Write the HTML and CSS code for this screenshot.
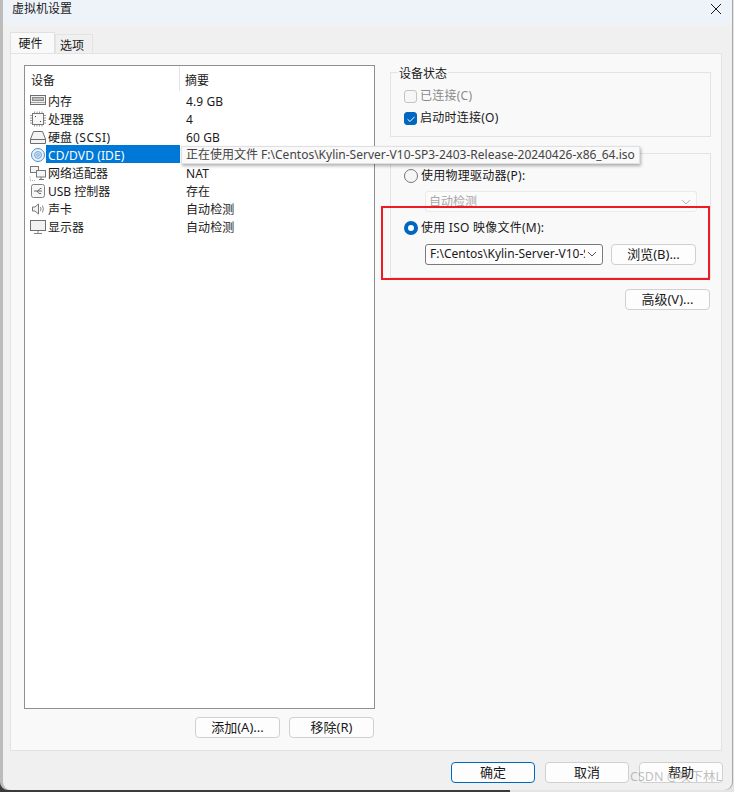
FILE: index.html
```html
<!DOCTYPE html>
<html lang="zh-CN">
<head>
<meta charset="utf-8">
<title>虚拟机设置</title>
<link rel="stylesheet" href="styles.css">
</head>
<body>
<div class="window">
  <header class="titlebar">
    <span class="title">虚拟机设置</span>
    <svg class="close" width="12" height="12" viewBox="0 0 12 12"><path d="M1 1L11 11M11 1L1 11" stroke="#1a1a1a" stroke-width="1" fill="none"/></svg>
  </header>
  <div class="content">
    <div class="tabs">
      <div class="tab active">硬件</div>
      <div class="tab">选项</div>
    </div>
    <div class="panel">
      <div class="left">
        <div class="list">
          <div class="list-head"><div class="col-a">设备</div><div class="col-b">摘要</div></div>
          <div class="row">
            <svg class="ico" width="18" height="14" viewBox="0 0 18 14"><rect x="1.500" y="2.500" width="15" height="9" fill="#f2f2f2" stroke="#6e6e6e"/><rect x="3.500" y="4.500" width="11" height="3" fill="#bdbdbd" stroke="#8a8a8a" stroke-width="1"/><path d="M2 9.500H16" stroke="#a0a0a0"/></svg>
            <span class="name">内存</span><span class="val">4.9 GB</span>
          </div>
          <div class="row">
            <svg class="ico" width="18" height="16" viewBox="0 0 18 16"><rect x="3.500" y="2.500" width="11" height="11" fill="#f7f7f7" stroke="#777"/><path d="M5.500 0.500V2M8 0.500V2M10.500 0.500V2M13 0.500V2M5.500 14V15.500M8 14V15.500M10.500 14V15.500M13 14V15.500M1 4.500H3M1 7H3M1 9.500H3M1 12H3M15 4.500H17M15 7H17M15 9.500H17M15 12H17" stroke="#9a9a9a"/><path d="M6 5h1v1H6zM11 10h1v1h-1z" fill="#444"/></svg>
            <span class="name">处理器</span><span class="val">4</span>
          </div>
          <div class="row">
            <svg class="ico" width="18" height="16" viewBox="0 0 18 16"><path d="M1.500 10L4.500 2.500H13.500L16.500 10V14.500H1.500Z" fill="#f4f4f4" stroke="#6e6e6e"/><path d="M1.500 10.500H16.500" stroke="#6e6e6e"/></svg>
            <span class="name">硬盘 <span class="latin">(SCSI)</span></span><span class="val">60 GB</span>
          </div>
          <div class="row">
            <svg class="ico" width="18" height="16" viewBox="0 0 18 16"><circle cx="9" cy="8" r="6.500" fill="#eaf3fb" stroke="#4c8fc9"/><circle cx="9" cy="8" r="3.500" fill="#c9dff2" stroke="#7aaad4"/><circle cx="9" cy="8" r="1.200" fill="#fff" stroke="#4c8fc9" stroke-width=".7"/></svg>
            <span class="name selected">CD/DVD (IDE)</span>
          </div>
          <div class="row">
            <svg class="ico" width="18" height="16" viewBox="0 0 18 16"><rect x="1.500" y="1.500" width="8" height="6" fill="#f4f4f4" stroke="#777"/><rect x="7.500" y="5.500" width="9" height="6.500" fill="#f4f4f4" stroke="#777"/><path d="M10 14.500H15M12 12V14.500" stroke="#777"/><path d="M1 11.500V15.500H7" stroke="#aaa" stroke-dasharray="1 1" fill="none"/></svg>
            <span class="name">网络适配器</span><span class="val">NAT</span>
          </div>
          <div class="row">
            <svg class="ico" width="18" height="16" viewBox="0 0 18 16"><rect x="2.500" y="1.500" width="13" height="13" rx="2" fill="#f7f7f7" stroke="#808080"/><path d="M5 8H13M9 8L11 5.500H12.500M8 8L10 10.500H12" stroke="#666" fill="none"/></svg>
            <span class="name">USB 控制器</span><span class="val">存在</span>
          </div>
          <div class="row">
            <svg class="ico" width="18" height="16" viewBox="0 0 18 16"><path d="M3.500 6H6L9.500 3V13L6 10H3.500Z" fill="#f4f4f4" stroke="#777"/><path d="M11.500 6Q12.500 8 11.500 10M13.500 4.500Q15.200 8 13.500 11.500" stroke="#888" fill="none"/></svg>
            <span class="name">声卡</span><span class="val">自动检测</span>
          </div>
          <div class="row">
            <svg class="ico" width="18" height="16" viewBox="0 0 18 16"><rect x="1.500" y="1.500" width="15" height="10" fill="#f2f2f2" stroke="#707070"/><path d="M5 14.500H13M9 12V14" stroke="#808080"/></svg>
            <span class="name">显示器</span><span class="val">自动检测</span>
          </div>
        </div>
        <div class="list-actions">
          <button class="btn">添加(A)...</button>
          <button class="btn">移除(R)</button>
        </div>
      </div>
      <div class="right">
        <fieldset class="group state">
          <legend>设备状态</legend>
          <label class="check disabled"><span class="box"></span>已连接(C)</label>
          <label class="check"><span class="box on"><svg width="14" height="14" viewBox="0 0 14 14"><path d="M3.500 7.200L6 9.500L10.500 4.800" stroke="#fff" stroke-width="1" fill="none"/></svg></span>启动时连接(O)</label>
        </fieldset>
        <div class="group media">
          <label class="check"><span class="radio"></span>使用物理驱动器(P):</label>
          <div class="select wide disabled"><span>自动检测</span><svg width="10" height="6" viewBox="0 0 10 6"><path d="M1 1L5 5L9 1" stroke="#b5b5b5" fill="none"/></svg></div>
          <label class="check iso"><span class="radio on"></span>使用 ISO 映像文件(M):</label>
          <div class="iso-row">
            <div class="select path"><span class="clip">F:\Centos\Kylin-Server-V10-SP3-2403-Release</span><svg width="10" height="6" viewBox="0 0 10 6"><path d="M1 1L5 5L9 1" stroke="#555" fill="none"/></svg></div>
            <button class="btn">浏览(B)...</button>
          </div>
        </div>
        <div class="adv"><button class="btn">高级(V)...</button></div>
      </div>
    </div>
    <div class="footer">
      <button class="btn primary">确定</button>
      <button class="btn">取消</button>
      <button class="btn">帮助</button>
    </div>
  </div>
</div>
<div class="tooltip">正在使用文件 F:\Centos\Kylin-Server-V10-SP3-2403-Release-20240426-x86_64.iso</div>
<div class="redbox"></div>
<div class="watermark">CSDN @攻下林L</div>
</body>
</html>
```
FILE: styles.css
```css
* { box-sizing: border-box; }
html, body { margin: 0; height: 100%; }
body {
  position: relative;
  width: 734px;
  height: 792px;
  overflow: hidden;
  background: linear-gradient(to right, #3a3a3a 0, #3a3a3a 510px, #e4e4e4 510px);
  font: 12px/16px "Noto Sans", "Noto Sans CJK SC", sans-serif;
  color: #1a1a1a;
}
.window {
  margin-left: 3px;
  width: 729px;
  height: 790px;
  background: #f0f0f0;
  border-radius: 0 0 8px 8px;
  box-shadow: -3px 0 0 #bcbcbc, 1px 0 0 #a8a8a8;
  display: flex;
  flex-direction: column;
}
.titlebar {
  height: 25px;
  flex: none;
  background: #eef3fa;
  display: flex;
  align-items: center;
  justify-content: space-between;
  padding: 0 10px 0 9px;
}
.title { position: relative; top: -4px; }
.close { position: relative; top: -4px; }
.content { flex: 1; padding: 7px 10px 0 7px; display: flex; flex-direction: column; }
.tabs { display: flex; align-items: flex-end; height: 21px; position: relative; z-index: 1; }
.tab {
  width: 38px;
  height: 19px;
  background: #f0f0f0;
  border: 1px solid #e3e3e3;
  border-bottom: 0;
  text-align: center;
  line-height: 21px;
  padding-right: 4px;
}
.tab.active { width: 45px; height: 21px; background: #f9f9f9; border-color: #e0e0e0; line-height: 22px; }
.panel {
  height: 698px;
  background: #f9f9f9;
  border: 1px solid #e3e3e3;
  padding: 11px 12px 9px 13px;
  display: flex;
  gap: 15px;
}
.left { width: 351px; flex: none; display: flex; flex-direction: column; }
.list {
  height: 644px;
  background: #fff;
  border: 1px solid #8f8f8f;
}
.list-head { display: flex; height: 25px; line-height: 29px; }
.col-a { width: 155px; padding-left: 6px; border-right: 1px solid #e5e5e5; }
.col-b { padding-left: 5px; }
.row { display: flex; height: 18px; position: relative; line-height: 22px; }
.ico { position: absolute; left: 4px; top: 2px; }
.name { margin-left: 21px; width: 134px; padding-left: 2px; height: 18px; white-space: nowrap; flex: none; }
.latin { letter-spacing: .6px; word-spacing: 1px; }
.name.selected { background: #0078d7; color: #fff; letter-spacing: .1px; }
.val { padding-left: 6px; letter-spacing: .1px; }
.list-actions { display: flex; justify-content: flex-end; gap: 9px; padding: 8px 1px 0 0; }
.list-actions .btn { width: 85px; }
.btn {
  width: 84px;
  height: 21px;
  padding: 0 0 2px;
  background: #fdfdfd;
  border: 1px solid #d0d0d0;
  border-radius: 4px;
  font: inherit;
  font-size: 13px;
  color: #1a1a1a;
  line-height: 18px;
}
.btn.primary { border-color: #0067c0; }
.right { flex: 1; padding-top: 7px; display: flex; flex-direction: column; }
.group { margin: 0; width: 321px; border: 1px solid #e3e3e3; }
.state { height: 65px; padding: 4px 0 0 13px; position: relative; }
.state legend { position: absolute; top: -7px; left: 7px; padding: 0 1px; background: #f9f9f9; line-height: 16px; }
.check { display: flex; align-items: center; height: 22px; gap: 3px; letter-spacing: .25px; }
.state .check:first-of-type { margin-top: 8px; }
.check.disabled { color: #8b8b8b; }
.box { width: 13px; height: 13px; border: 1px solid #c4c4c4; border-radius: 3px; background: #f6f6f6; display: block; }
.box.on { background: #0067c0; border-color: #0067c0; }
.box svg { display: block; margin: -1px; }
.radio { width: 14px; height: 14px; border-radius: 50%; border: 1px solid #767676; background: #f6f6f6; }
.radio.on { border: 4px solid #0067c0; background: #fff; }
.media { height: 125px; margin-top: 16px; padding: 11px 0 0 13px; }
.select {
  display: flex;
  align-items: center;
  justify-content: space-between;
  height: 21px;
  background: #fdfdfd;
  border: 1px solid #7a7a7a;
  border-radius: 3px;
  padding: 0 5px 0 4px;
  overflow: hidden;
}
.select.wide { width: 272px; margin: 4px 0 0 21px; border-color: #eaeaea; color: #a8a8a8; padding-left: 3px; background: #fbfbfb; }
.check.iso { margin-top: 5px; }
.iso-row { display: flex; align-items: center; gap: 8px; margin: 4px 0 0 21px; }
.select.path { width: 178px; flex: none; }
.clip { width: 155px; overflow: hidden; white-space: nowrap; }
.iso-row .btn { width: 85px; margin-top: 1px; }
.adv { width: 320px; display: flex; justify-content: flex-end; margin-top: 11px; }
.adv .btn { width: 85px; }
.footer { display: flex; justify-content: flex-end; gap: 10px; padding: 11px 0 0; margin-right: -1px; }
.tooltip {
  position: absolute;
  left: 181px;
  top: 146px;
  width: 459px;
  height: 18px;
  padding: 0 0 0 4px;
  background: #f9f9f9;
  border: 1px solid #e0e0e0;
  box-shadow: 1px 2px 3px rgba(0,0,0,.3);
  line-height: 16px;
  color: #444;
  white-space: nowrap;
}
.redbox {
  position: absolute;
  left: 381px;
  top: 206px;
  width: 329px;
  height: 74px;
  border: 2px solid #ed1c24;
}
.watermark {
  position: absolute;
  left: 630px;
  top: 769px;
  color: rgba(130,130,130,.5);
  font-size: 12.500px;
  white-space: nowrap;
}
```
